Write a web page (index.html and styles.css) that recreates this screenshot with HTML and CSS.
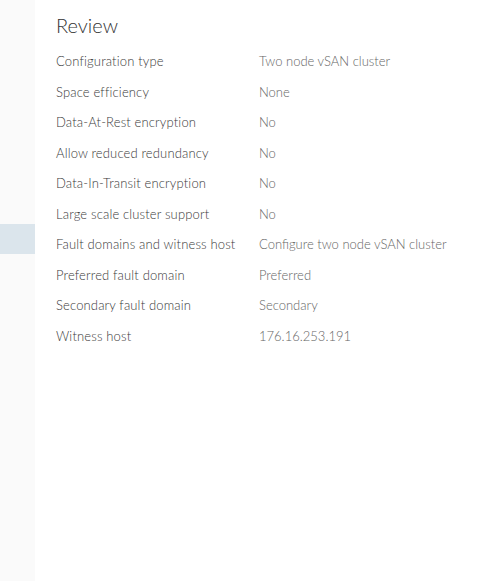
FILE: index.html
```html
<!DOCTYPE html>
<html lang="en">
<head>
    <meta charset="UTF-8">
    <meta name="viewport" content="width=device-width, initial-scale=1.0">
    <title>Review</title>
    <link rel="stylesheet" href="styles.css">
</head>
<body>
    <div class="layout">
        <div class="sidebar">
            <div class="step active"></div>
        </div>

        <div class="content">
            <h2>Review</h2>
            <div class="review-list">
                <div class="row"><span class="label">Configuration type</span><span class="value">Two node vSAN cluster</span></div>
                <div class="row"><span class="label">Space efficiency</span><span class="value">None</span></div>
                <div class="row"><span class="label">Data-At-Rest encryption</span><span class="value">No</span></div>
                <div class="row"><span class="label">Allow reduced redundancy</span><span class="value">No</span></div>
                <div class="row"><span class="label">Data-In-Transit encryption</span><span class="value">No</span></div>
                <div class="row"><span class="label">Large scale cluster support</span><span class="value">No</span></div>
                <div class="row"><span class="label">Fault domains and witness host</span><span class="value">Configure two node vSAN cluster</span></div>
                <div class="row"><span class="label">Preferred fault domain</span><span class="value">Preferred</span></div>
                <div class="row"><span class="label">Secondary fault domain</span><span class="value">Secondary</span></div>
                <div class="row"><span class="label">Witness host</span><span class="value">176.16.253.191</span></div>
            </div>
        </div>
    </div>
</body>
</html>
```

FILE: styles.css
```css
body {
    margin: 0;
    background-color: #ffffff;
    font-family: Lato, "Open Sans", sans-serif;
    color: #565656;
}

.layout {
    display: flex;
    height: 581px;
}

.sidebar {
    width: 35px;
    background-color: #fafafa;
    padding-top: 224px;
}
.step.active {
    height: 30px;
    background-color: #dbe5ec;
}

.content {
    flex-grow: 1;
    padding-left: 21px;
}

h2 {
    margin: 12px 0 8px 0;
    font-size: 20px;
    font-weight: 300;
    color: #333333;
    line-height: 26px;
}

.row {
    display: flex;
    height: 30.5px;
    align-items: center;
    font-size: 13px;
}
.label {
    width: 203px;
    color: #3a3a3a;
    font-weight: 300;
    letter-spacing: 0.15px;
}
.value {
    color: #666666;
    font-weight: 300;
}
```
